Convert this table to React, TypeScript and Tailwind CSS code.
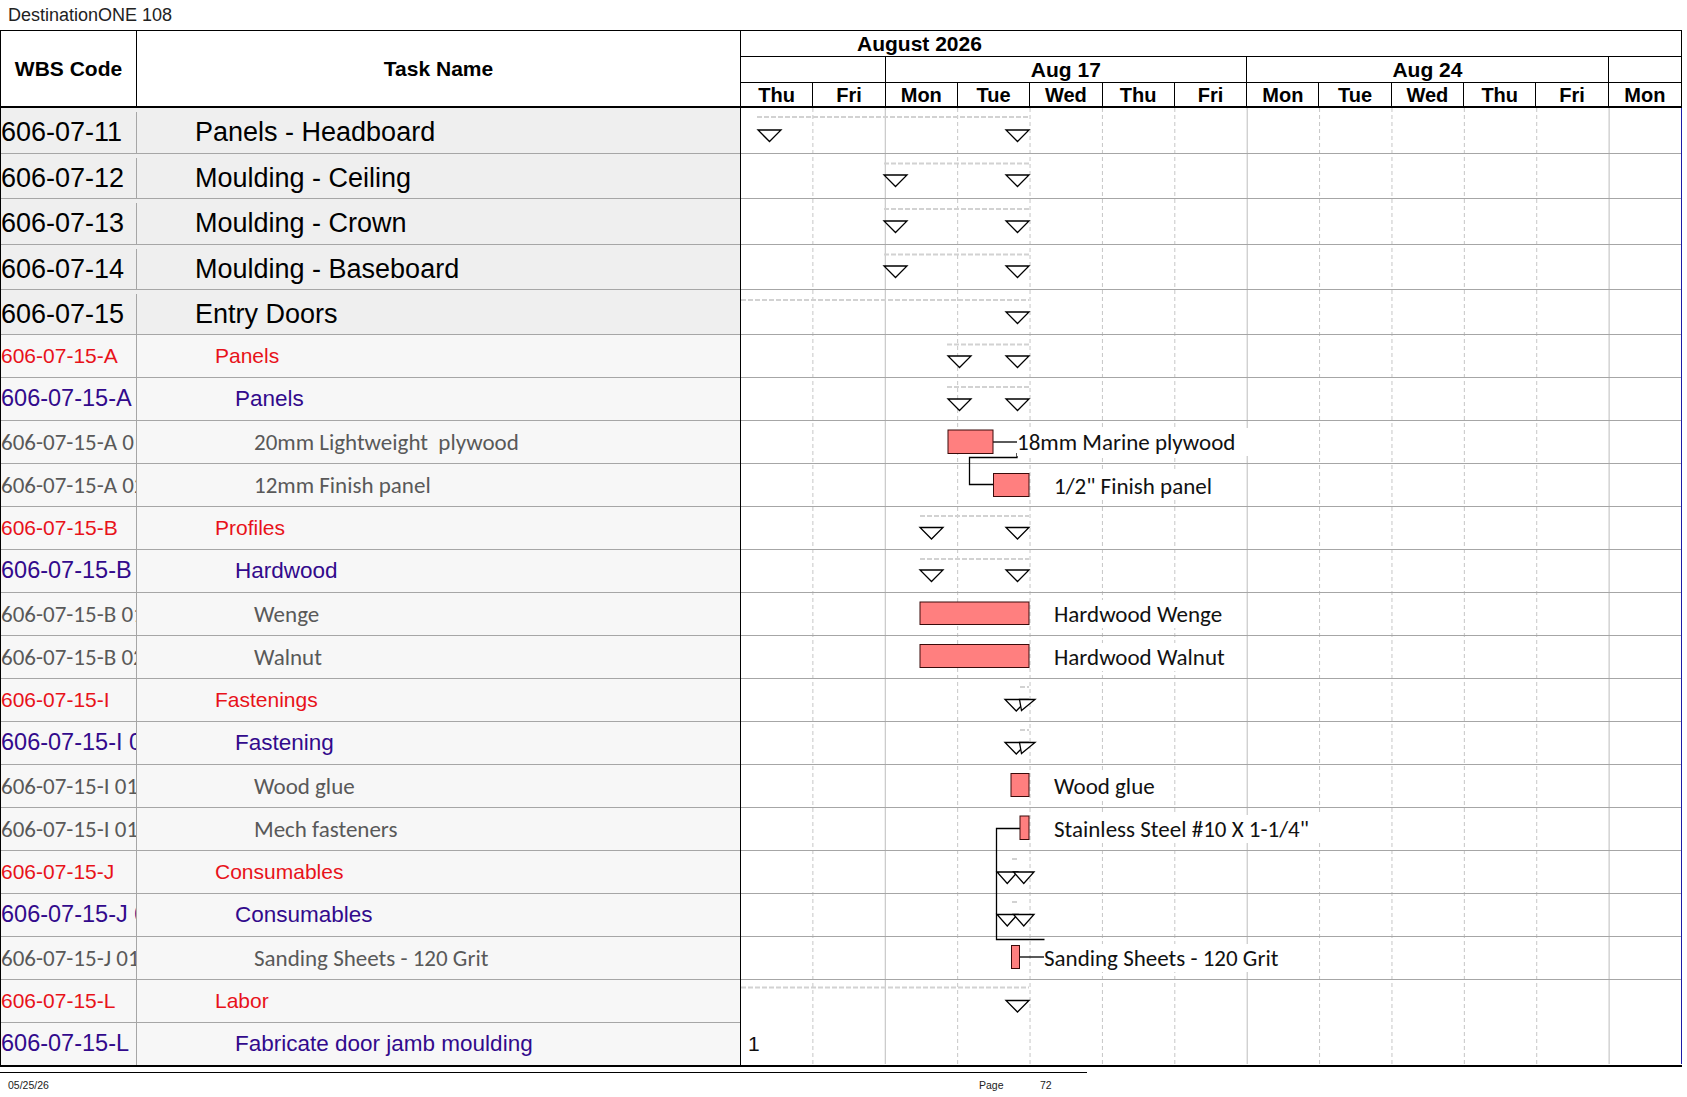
import React from "react";

const ARIAL = "font-['Liberation_Sans',Arial,sans-serif]";
const CALIBRI = "font-['Carlito','Lato','Open_Sans',sans-serif]";

type Row = {
	code: string;
	name: string;
	kind: "top" | "red" | "blue" | "gray";
	h: string;
};

const rows: Row[] = [
	{ code: "606-07-11", name: "Panels - Headboard", kind: "top", h: "h-[46px]" },
	{ code: "606-07-12", name: "Moulding - Ceiling", kind: "top", h: "h-[45px]" },
	{ code: "606-07-13", name: "Moulding - Crown", kind: "top", h: "h-[46px]" },
	{ code: "606-07-14", name: "Moulding - Baseboard", kind: "top", h: "h-[45px]" },
	{ code: "606-07-15", name: "Entry Doors", kind: "top", h: "h-[45px]" },
	{ code: "606-07-15-A", name: "Panels", kind: "red", h: "h-[43px]" },
	{ code: "606-07-15-A", name: "Panels", kind: "blue", h: "h-[43px]" },
	{ code: "606-07-15-A 01", name: "20mm Lightweight\u00a0 plywood", kind: "gray", h: "h-[43px]" },
	{ code: "606-07-15-A 02", name: "12mm Finish panel", kind: "gray", h: "h-[43px]" },
	{ code: "606-07-15-B", name: "Profiles", kind: "red", h: "h-[43px]" },
	{ code: "606-07-15-B", name: "Hardwood", kind: "blue", h: "h-[43px]" },
	{ code: "606-07-15-B 01", name: "Wenge", kind: "gray", h: "h-[43px]" },
	{ code: "606-07-15-B 02", name: "Walnut", kind: "gray", h: "h-[43px]" },
	{ code: "606-07-15-I", name: "Fastenings", kind: "red", h: "h-[43px]" },
	{ code: "606-07-15-I 01", name: "Fastening", kind: "blue", h: "h-[43px]" },
	{ code: "606-07-15-I 01 01", name: "Wood glue", kind: "gray", h: "h-[43px]" },
	{ code: "606-07-15-I 01 02", name: "Mech fasteners", kind: "gray", h: "h-[43px]" },
	{ code: "606-07-15-J", name: "Consumables", kind: "red", h: "h-[43px]" },
	{ code: "606-07-15-J 01", name: "Consumables", kind: "blue", h: "h-[43px]" },
	{ code: "606-07-15-J 01 01", name: "Sanding Sheets - 120 Grit", kind: "gray", h: "h-[43px]" },
	{ code: "606-07-15-L", name: "Labor", kind: "red", h: "h-[43px]" },
	{ code: "606-07-15-L", name: "Fabricate door jamb moulding", kind: "blue", h: "h-[42px]" },
];

const rowStyle = {
	top: {
		bg: "bg-[#efefef] pt-[4px]",
		code: `${ARIAL} text-[27px] text-black`,
		name: `${ARIAL} text-[27px] text-black pl-[58px]`,
	},
	red: {
		bg: "bg-[#f7f7f7]",
		code: `${ARIAL} text-[21px] text-[#e8121a]`,
		name: `${ARIAL} text-[21px] text-[#e8121a] pl-[78px]`,
	},
	blue: {
		bg: "bg-[#f7f7f7]",
		code: `${ARIAL} text-[23.5px] text-[#320a8c]`,
		name: `${ARIAL} text-[22.5px] text-[#320a8c] pl-[98px]`,
	},
	gray: {
		bg: "bg-[#f7f7f7]",
		code: `${CALIBRI} text-[23px] text-[#595959]`,
		name: `${CALIBRI} text-[23px] text-[#595959] pl-[117px]`,
	},
};

// chart geometry, page coordinates
const LEFT = 741;
const TOP = 108;
const COL = 941 / 13;
const X = (v: number) => v - LEFT;
const Y = (v: number) => v - TOP;

const rowLines = [153, 198, 244, 289, 334];
for (let y = 377; y <= 1021; y += 43) rowLines.push(y);

type Summary = { y: number; x1: number; x2: number; tris: [number, number][]; ty: number };

const summaries: Summary[] = [
	{ y: 117, x1: 757, x2: 1029, tris: [[758, 23], [1006, 23]], ty: 130 },
	{ y: 163.5, x1: 884, x2: 1029, tris: [[884, 23], [1006, 23]], ty: 175 },
	{ y: 209, x1: 884, x2: 1029, tris: [[884, 23], [1006, 23]], ty: 221 },
	{ y: 254.5, x1: 884, x2: 1029, tris: [[884, 23], [1006, 23]], ty: 266 },
	{ y: 300, x1: 741, x2: 1029, tris: [[1006, 23]], ty: 312 },
	{ y: 344.5, x1: 947, x2: 1029, tris: [[948, 23], [1006, 23]], ty: 356 },
	{ y: 387, x1: 947, x2: 1029, tris: [[948, 23], [1006, 23]], ty: 399 },
	{ y: 516, x1: 920, x2: 1029, tris: [[920, 23], [1006, 23]], ty: 527.5 },
	{ y: 559, x1: 920, x2: 1029, tris: [[920, 23], [1006, 23]], ty: 570 },
	{ y: 687, x1: 1020, x2: 1029, tris: [[1005, 22.5]], ty: 699.5 },
	{ y: 730, x1: 1020, x2: 1029, tris: [[1005, 22.5]], ty: 742.5 },
	{ y: 859, x1: 1012, x2: 1019, tris: [[997, 20.5], [1013.5, 20.5]], ty: 872 },
	{ y: 902, x1: 1012, x2: 1019, tris: [[997, 20.5], [1013.5, 20.5]], ty: 914.5 },
	{ y: 987.5, x1: 741, x2: 1029, tris: [[1006, 23]], ty: 1000.5 },
];

// the skewed second marker on the two fastening rows
const slants = [699.5, 742.5];

const bars = [
	[948, 993, 430, 453.5],
	[993.5, 1029, 473.5, 496.5],
	[920, 1029, 602, 624.5],
	[920, 1029, 644.5, 667.5],
	[1011, 1029, 773.5, 796.5],
	[1020, 1029, 816, 839.5],
	[1011.5, 1019.5, 945.5, 968.5],
];

const links: [number, number][][] = [
	[[993, 442], [1017, 442]],
	[[1017, 453], [1017, 457.5], [969.5, 457.5], [969.5, 484.5], [993.5, 484.5]],
	[[1020, 828.5], [996.5, 828.5], [996.5, 939.5], [1044.5, 939.5]],
	[[1019.5, 957], [1044, 957]],
];

const labels = [
	{ x: 1017, cy: 442, t: "18mm Marine plywood" },
	{ x: 1054, cy: 486, t: "1/2\" Finish panel" },
	{ x: 1054, cy: 614, t: "Hardwood Wenge" },
	{ x: 1054, cy: 657, t: "Hardwood Walnut" },
	{ x: 1054, cy: 786, t: "Wood glue" },
	{ x: 1054, cy: 829, t: "Stainless Steel #10 X 1-1/4\"" },
	{ x: 1044, cy: 958, t: "Sanding Sheets - 120 Grit" },
];

const days = ["Thu", "Fri", "Mon", "Tue", "Wed", "Thu", "Fri", "Mon", "Tue", "Wed", "Thu", "Fri", "Mon"];

function GanttBody() {
	return (
		<div className="relative h-[956px] w-[941px] border-r border-[#1c1ca8]">
			<svg width={940} height={956} className="block">
				{Array.from({ length: 12 }, (_, k) => {
					const i = k + 1;
					const x = COL * i - 0.5;
					const solid = i === 2 || i === 7 || i === 12;
					return (
						<line
							key={i}
							x1={x}
							x2={x}
							y1={0}
							y2={956}
							stroke={solid ? "#bdbdbd" : "#c6c6c6"}
							strokeDasharray={solid ? undefined : "4 3"}
						/>
					);
				})}
				{rowLines.map((y) => (
					<line key={y} x1={0} x2={940} y1={Y(y) + 0.5} y2={Y(y) + 0.5} stroke="#a6a6a6" />
				))}
				{summaries.map((s) => (
					<g key={s.y}>
						<line
							x1={X(s.x1)}
							x2={X(s.x2)}
							y1={Y(s.y)}
							y2={Y(s.y)}
							stroke="#d2d2d2"
							strokeWidth={2}
							strokeDasharray="5 2"
						/>
						{s.tris.map(([tx, w]) => (
							<polygon
								key={tx}
								points={`${X(tx)},${Y(s.ty)} ${X(tx + w)},${Y(s.ty)} ${X(tx + w / 2)},${Y(s.ty) + 11.5}`}
								fill="white"
								stroke="black"
								strokeWidth={1.3}
							/>
						))}
					</g>
				))}
				{slants.map((ty) => (
					<polygon
						key={ty}
						points={`${X(1019.5)},${Y(ty)} ${X(1035)},${Y(ty)} ${X(1021.5)},${Y(ty) + 11}`}
						fill="white"
						stroke="black"
						strokeWidth={1.3}
					/>
				))}
				{links.map((pts, i) => (
					<polyline
						key={i}
						points={pts.map(([x, y]) => `${X(x)},${Y(y)}`).join(" ")}
						fill="none"
						stroke="black"
						strokeWidth={1.3}
					/>
				))}
				{bars.map(([x1, x2, y1, y2]) => (
					<rect
						key={`${x1}-${y1}`}
						x={X(x1)}
						y={Y(y1)}
						width={x2 - x1}
						height={y2 - y1}
						fill="#ff7f7f"
						stroke="#3a0a0a"
						strokeWidth={1}
					/>
				))}
				<text x={X(748)} y={Y(1051)} fontSize={21} fill="#111" fontFamily="'Liberation Sans', Arial, sans-serif">
					1
				</text>
			</svg>
			{labels.map((l) => (
				<span
					key={l.t}
					className={`absolute h-[28px] whitespace-nowrap bg-white pr-[14px] text-[23px] leading-[28px] text-[#111] ${CALIBRI}`}
					style={{ left: X(l.x), top: Y(l.cy) - 14 }}
				>
					{l.t}
				</span>
			))}
		</div>
	);
}

export default function App() {
	return (
		<div className={`relative h-[1097px] w-[1687px] overflow-hidden bg-white ${ARIAL}`}>
			<div className="flex h-[30px] items-center pl-[8px] text-[18px] text-[#222]">DestinationONE 108</div>

			<div className="flex w-[1682px] border-t border-b-2 border-black">
				<div className="w-[740px] shrink-0 border-l border-black">
					<div className="flex h-[77px] border-b-2 border-black font-bold text-[21px] leading-none text-black">
						<div className="flex w-[136px] items-center justify-center border-r border-black">WBS Code</div>
						<div className="flex flex-1 items-center justify-center">Task Name</div>
					</div>
					{rows.map((r, i) => {
						const s = rowStyle[r.kind];
						const last = i === rows.length - 1;
						return (
							<div key={i} className={`flex ${r.h} ${s.bg} ${last ? "" : "border-b border-[#a6a6a6]"}`}>
								<div
									className={`flex w-[136px] shrink-0 items-center overflow-hidden whitespace-nowrap border-r border-[#a6a6a6] ${s.code}`}
								>
									{r.code}
								</div>
								<div className={`flex flex-1 items-center whitespace-nowrap ${s.name}`}>{r.name}</div>
							</div>
						);
					})}
				</div>

				<div className="w-[942px] shrink-0 border-l border-black">
					<div className="h-[77px] w-[941px] border-r border-b-2 border-black font-bold leading-none text-black">
						<div className="flex h-[26px] items-center border-b border-black pl-[116px] text-[21px]">
							August 2026
						</div>
						<div className="grid h-[26px] grid-cols-13 grid-rows-1 border-b border-black text-[21px]">
							<div className="col-span-2 border-r border-black" />
							<div className="col-span-5 flex items-center justify-center border-r border-black">Aug 17</div>
							<div className="col-span-5 flex items-center justify-center border-r border-black">Aug 24</div>
							<div className="col-span-1" />
						</div>
						<div className="grid h-[23px] grid-cols-13 grid-rows-1 text-[20px]">
							{days.map((d, i) => (
								<div
									key={i}
									className={`flex items-center justify-center ${i < 12 ? "border-r border-black" : ""}`}
								>
									{d}
								</div>
							))}
						</div>
					</div>
					<GanttBody />
				</div>
			</div>

			<div className="mt-[5px] h-px w-[1087px] bg-black" />
			<div className="mt-[6px] flex h-[12px] text-[10.5px] leading-[12px] text-[#222]">
				<span className="w-[979px] pl-[8px]">05/25/26</span>
				<span className="w-[61px]">Page</span>
				<span>72</span>
			</div>
		</div>
	);
}
